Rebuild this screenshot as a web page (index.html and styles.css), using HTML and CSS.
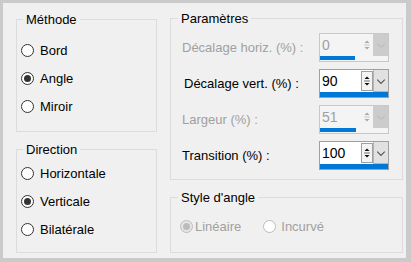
FILE: index.html
```html
<!DOCTYPE html>
<html lang="fr">
<head>
<meta charset="utf-8">
<title>Paramètres</title>
<link rel="stylesheet" href="styles.css">
</head>
<body>
<div class="panel">
  <div class="col">
    <fieldset class="group g-method">
      <legend>Méthode</legend>
      <div class="radio"><span class="circle"></span><span>Bord</span></div>
      <div class="radio"><span class="circle checked"></span><span>Angle</span></div>
      <div class="radio"><span class="circle"></span><span>Miroir</span></div>
    </fieldset>
    <fieldset class="group g-dir">
      <legend>Direction</legend>
      <div class="radio"><span class="circle"></span><span>Horizontale</span></div>
      <div class="radio"><span class="circle checked"></span><span>Verticale</span></div>
      <div class="radio"><span class="circle"></span><span>Bilatérale</span></div>
    </fieldset>
  </div>
  <div class="col">
    <fieldset class="group g-params">
      <legend>Paramètres</legend>
      <div class="row disabled">
        <span class="lbl">Décalage horiz. (%) :</span>
        <div class="spin">
          <div class="spin-top">
            <span class="val">0</span>
            <span class="arrows"><svg width="12" height="20" viewBox="0 0 12 20"><path d="M3 7.5h6L6 4.5z"/><path d="M2.5 10h7" class="sep"/><path d="M3 12.5h6L6 15.5z"/></svg></span>
            <span class="drop"><svg width="15" height="20" viewBox="0 0 15 20"><path d="M3.5 8.5l4 4 4-4" class="chev"/></svg></span>
          </div>
          <div class="bar"><span class="fill" style="width:51%"></span></div>
        </div>
      </div>
      <div class="row">
        <span class="lbl indent">Décalage vert. (%) :</span>
        <div class="spin">
          <div class="spin-top">
            <span class="val">90</span>
            <span class="arrows"><svg width="12" height="20" viewBox="0 0 12 20"><path d="M3 7.5h6L6 4.5z"/><path d="M2.5 10h7" class="sep"/><path d="M3 12.5h6L6 15.5z"/></svg></span>
            <span class="drop"><svg width="15" height="20" viewBox="0 0 15 20"><path d="M3.5 8.5l4 4 4-4" class="chev"/></svg></span>
          </div>
          <div class="bar"><span class="fill" style="width:100%"></span></div>
        </div>
      </div>
      <div class="row disabled">
        <span class="lbl">Largeur (%) :</span>
        <div class="spin">
          <div class="spin-top">
            <span class="val">51</span>
            <span class="arrows"><svg width="12" height="20" viewBox="0 0 12 20"><path d="M3 7.5h6L6 4.5z"/><path d="M2.5 10h7" class="sep"/><path d="M3 12.5h6L6 15.5z"/></svg></span>
            <span class="drop"><svg width="15" height="20" viewBox="0 0 15 20"><path d="M3.5 8.5l4 4 4-4" class="chev"/></svg></span>
          </div>
          <div class="bar"><span class="fill" style="width:53%"></span></div>
        </div>
      </div>
      <div class="row">
        <span class="lbl">Transition (%) :</span>
        <div class="spin">
          <div class="spin-top">
            <span class="val">100</span>
            <span class="arrows"><svg width="12" height="20" viewBox="0 0 12 20"><path d="M3 7.5h6L6 4.5z"/><path d="M2.5 10h7" class="sep"/><path d="M3 12.5h6L6 15.5z"/></svg></span>
            <span class="drop"><svg width="15" height="20" viewBox="0 0 15 20"><path d="M3.5 8.5l4 4 4-4" class="chev"/></svg></span>
          </div>
          <div class="bar"><span class="fill" style="width:100%"></span></div>
        </div>
      </div>
    </fieldset>
    <fieldset class="group g-style">
      <legend>Style d'angle</legend>
      <div class="hradios">
        <div class="radio disabled r-lin"><span class="circle checked"></span><span>Linéaire</span></div>
        <div class="radio disabled r-inc"><span class="circle"></span><span>Incurvé</span></div>
      </div>
    </fieldset>
  </div>
</div>
</body>
</html>
```

FILE: styles.css
```css
html, body {
  margin: 0;
  padding: 0;
  background: #cacaca;
}
body {
  width: 411px;
  height: 262px;
  font-family: "Liberation Sans", Arial, sans-serif;
  font-size: 13px;
  color: #000;
}
.panel {
  margin: 3px 0 0 3px;
  width: 403px;
  height: 255px;
  box-sizing: border-box;
  background: #f0f0f0;
  padding: 8px 0 0 13px;
  display: grid;
  grid-template-columns: 141px 233px;
  column-gap: 13px;
  align-items: start;
}
.col {
  display: flex;
  flex-direction: column;
  gap: 10px;
}
.group {
  margin: 0;
  border: 1px solid #dcdcdc;
  box-sizing: border-box;
  min-width: 0;
}
.group legend {
  padding: 0 3px;
  line-height: 15px;
  height: 15px;
  color: #000;
}
.g-method {
  margin-top: 1px;
  height: 120px;
  padding: 9px 0 0 4px;
}
.g-dir {
  height: 111px;
  padding: 2px 0 0 4px;
}
.g-method legend, .g-dir legend {
  margin-left: 2px;
}
.g-params {
  height: 169px;
  padding: 7px 13px 0 11px;
  display: flex;
  flex-direction: column;
  gap: 7px;
}
.g-params legend {
  margin-left: -4px;
}
.g-style {
  height: 63px;
  padding: 7px 0 0 9px;
}
.g-style legend {
  margin-left: -2px;
}
.radio {
  height: 28px;
  display: flex;
  align-items: center;
  gap: 6px;
}
.circle {
  width: 13px;
  height: 13px;
  box-sizing: border-box;
  border: 1px solid #333;
  border-radius: 50%;
  background: #fff;
  display: flex;
  align-items: center;
  justify-content: center;
  flex: none;
}
.circle.checked::after {
  content: "";
  width: 7px;
  height: 7px;
  border-radius: 50%;
  background: #333;
}
.radio.disabled {
  color: #a0a0a0;
}
.radio.disabled .circle {
  border-color: #bcbcbc;
}
.radio.disabled .circle.checked {
  background: #e6e6e6;
}
.radio.disabled .circle.checked::after {
  background: #bcbcbc;
}
.hradios {
  display: flex;
  align-items: center;
}
.r-lin { gap: 2px; }
.r-inc { gap: 5px; margin-left: 22px; }

.row {
  height: 29px;
  display: grid;
  grid-template-columns: 1fr 70px;
  align-items: center;
}
.lbl.indent {
  padding-left: 2px;
}
.row.disabled .lbl {
  color: #a0a0a0;
}
.spin {
  width: 70px;
  height: 29px;
  box-sizing: border-box;
  border: 1px solid #a0a0a0;
  background: #fff;
  display: flex;
  flex-direction: column;
}
.spin-top {
  height: 22px;
  display: flex;
}
.val {
  flex: 1;
  padding-left: 2px;
  line-height: 22px;
  font-size: 14px;
}
.arrows {
  width: 13px;
  display: flex;
  align-items: center;
  justify-content: center;
}
.arrows svg {
  display: block;
  border: 1px solid #a0a0a0;
  box-sizing: border-box;
  background: #f4f4f4;
}
.arrows path { fill: #111; }
.arrows path.sep { fill: none; stroke: #555; stroke-width: 1; }
.drop {
  width: 15px;
  display: flex;
  align-items: center;
  background: #e1e1e1;
  border-left: 1px solid #b4b4b4;
  border-bottom: 1px solid #b4b4b4;
  box-sizing: border-box;
}
.drop svg { display: block; }
.chev {
  fill: none;
  stroke: #555;
  stroke-width: 1.2;
}
.bar {
  flex: 1;
  background: #f0f0f0;
  display: flex;
}
.fill {
  display: block;
  height: 5px;
  background: #0078d7;
}

.row.disabled .spin {
  border-color: #c8c8c8;
  background: #f4f4f4;
}
.row.disabled .val { color: #a0a0a0; }
.row.disabled .arrows svg {
  border-color: transparent;
  background: transparent;
}
.row.disabled .arrows path { fill: #a8a8a8; }
.row.disabled .arrows path.sep { stroke: #c0c0c0; fill: none; }
.row.disabled .drop {
  background: #cccccc;
  border-color: #cccccc;
}
.row.disabled .chev { stroke: #bdbdbd; }
.row.disabled .bar { background: #f4f4f4; }
.row.disabled .fill { height: 4px; }
```
